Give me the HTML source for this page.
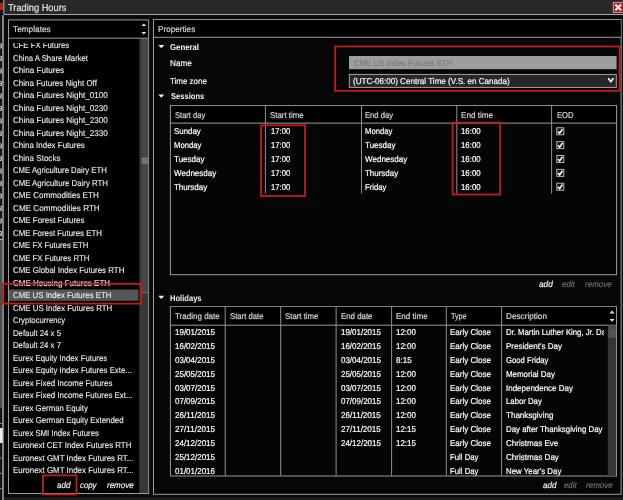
<!DOCTYPE html>
<html><head><meta charset="utf-8"><title>Trading Hours</title>
<style>
html,body{margin:0;padding:0;}
body{width:623px;height:500px;overflow:hidden;background:#0a0a0a;position:relative;font-family:"Liberation Sans",sans-serif;color:#f4f4f4;}
svg{position:absolute;left:0;top:0;}
.t{position:absolute;white-space:nowrap;font-size:8.5px;line-height:10px;transform-origin:0 0;-webkit-text-stroke:0.2px currentColor;}
.title{font-size:10px;color:#e0e0e0;}
.hdr{color:#d6d6d6;}
.b{font-weight:bold;-webkit-text-stroke:0;}
.it{font-style:italic;}
.cell{color:#fff;}
.li{color:#ececec;-webkit-text-stroke:0.12px currentColor;}
.clip{position:absolute;overflow:hidden;}
#txt{position:absolute;left:0;top:0;width:623px;height:500px;will-change:transform;}
</style></head><body>
<svg width="623" height="500" viewBox="0 0 623 500">
<rect x="4.00" y="0.00" width="619.00" height="14.00" fill="#282828" stroke="none" stroke-width="1" />
<rect x="4.00" y="14.00" width="619.00" height="1.00" fill="#a6a6a6" stroke="none" stroke-width="1" />
<rect x="0.00" y="0.00" width="4.00" height="500.00" fill="#141414" stroke="none" stroke-width="1" />
<rect x="0.00" y="3.00" width="3.00" height="7.00" fill="#b8200f" stroke="none" stroke-width="1" />
<rect x="3.00" y="0.00" width="1.50" height="14.00" fill="#7a8a80" stroke="none" stroke-width="1" />
<rect x="2.10" y="15.00" width="1.80" height="485.00" fill="#8e8e8e" stroke="none" stroke-width="1" />
<path d="M0 43.80 Q1.7 43.80 1.7 45.10 Q1.7 46.10 0 46.40" stroke="#c4c4c4" stroke-width="1.1" fill="none"/>
<path d="M0 48.00 Q1.9 48.00 1.6 46.40" stroke="#c4c4c4" stroke-width="1.1" fill="none"/>
<path d="M0 56.30 Q1.7 56.30 1.7 57.60 Q1.7 58.60 0 58.90" stroke="#c4c4c4" stroke-width="1.1" fill="none"/>
<path d="M0 60.50 Q1.9 60.50 1.6 58.90" stroke="#c4c4c4" stroke-width="1.1" fill="none"/>
<path d="M0 68.80 Q1.7 68.80 1.7 70.10 Q1.7 71.10 0 71.40" stroke="#c4c4c4" stroke-width="1.1" fill="none"/>
<path d="M0 73.00 Q1.9 73.00 1.6 71.40" stroke="#c4c4c4" stroke-width="1.1" fill="none"/>
<path d="M0 81.30 Q1.7 81.30 1.7 82.60 Q1.7 83.60 0 83.90" stroke="#c4c4c4" stroke-width="1.1" fill="none"/>
<path d="M0 85.50 Q1.9 85.50 1.6 83.90" stroke="#c4c4c4" stroke-width="1.1" fill="none"/>
<path d="M0 93.80 Q1.7 93.80 1.7 95.10 Q1.7 96.10 0 96.40" stroke="#c4c4c4" stroke-width="1.1" fill="none"/>
<path d="M0 98.00 Q1.9 98.00 1.6 96.40" stroke="#c4c4c4" stroke-width="1.1" fill="none"/>
<path d="M0 106.30 Q1.7 106.30 1.7 107.60 Q1.7 108.60 0 108.90" stroke="#c4c4c4" stroke-width="1.1" fill="none"/>
<path d="M0 110.50 Q1.9 110.50 1.6 108.90" stroke="#c4c4c4" stroke-width="1.1" fill="none"/>
<path d="M0 118.80 Q1.7 118.80 1.7 120.10 Q1.7 121.10 0 121.40" stroke="#c4c4c4" stroke-width="1.1" fill="none"/>
<path d="M0 123.00 Q1.9 123.00 1.6 121.40" stroke="#c4c4c4" stroke-width="1.1" fill="none"/>
<path d="M0 131.30 Q1.7 131.30 1.7 132.60 Q1.7 133.60 0 133.90" stroke="#c4c4c4" stroke-width="1.1" fill="none"/>
<path d="M0 135.50 Q1.9 135.50 1.6 133.90" stroke="#c4c4c4" stroke-width="1.1" fill="none"/>
<path d="M0 143.80 Q1.7 143.80 1.7 145.10 Q1.7 146.10 0 146.40" stroke="#c4c4c4" stroke-width="1.1" fill="none"/>
<path d="M0 148.00 Q1.9 148.00 1.6 146.40" stroke="#c4c4c4" stroke-width="1.1" fill="none"/>
<path d="M0 156.30 Q1.7 156.30 1.7 157.60 Q1.7 158.60 0 158.90" stroke="#c4c4c4" stroke-width="1.1" fill="none"/>
<path d="M0 160.50 Q1.9 160.50 1.6 158.90" stroke="#c4c4c4" stroke-width="1.1" fill="none"/>
<path d="M0 168.80 Q1.7 168.80 1.7 170.10 Q1.7 171.10 0 171.40" stroke="#c4c4c4" stroke-width="1.1" fill="none"/>
<path d="M0 173.00 Q1.9 173.00 1.6 171.40" stroke="#c4c4c4" stroke-width="1.1" fill="none"/>
<path d="M0 181.30 Q1.7 181.30 1.7 182.60 Q1.7 183.60 0 183.90" stroke="#c4c4c4" stroke-width="1.1" fill="none"/>
<path d="M0 185.50 Q1.9 185.50 1.6 183.90" stroke="#c4c4c4" stroke-width="1.1" fill="none"/>
<path d="M0 193.80 Q1.7 193.80 1.7 195.10 Q1.7 196.10 0 196.40" stroke="#c4c4c4" stroke-width="1.1" fill="none"/>
<path d="M0 198.00 Q1.9 198.00 1.6 196.40" stroke="#c4c4c4" stroke-width="1.1" fill="none"/>
<path d="M0 206.30 Q1.7 206.30 1.7 207.60 Q1.7 208.60 0 208.90" stroke="#c4c4c4" stroke-width="1.1" fill="none"/>
<path d="M0 210.50 Q1.9 210.50 1.6 208.90" stroke="#c4c4c4" stroke-width="1.1" fill="none"/>
<path d="M0 218.80 Q1.7 218.80 1.7 220.10 Q1.7 221.10 0 221.40" stroke="#c4c4c4" stroke-width="1.1" fill="none"/>
<path d="M0 223.00 Q1.9 223.00 1.6 221.40" stroke="#c4c4c4" stroke-width="1.1" fill="none"/>
<path d="M0 231.30 Q1.7 231.30 1.7 232.60 Q1.7 233.60 0 233.90" stroke="#c4c4c4" stroke-width="1.1" fill="none"/>
<path d="M0 235.50 Q1.9 235.50 1.6 233.90" stroke="#c4c4c4" stroke-width="1.1" fill="none"/>
<rect x="0.00" y="240.00" width="2.10" height="168.00" fill="#465050" stroke="none" stroke-width="1" />
<line x1="0.00" y1="239.50" x2="2.80" y2="239.50" stroke="#b0b0b0" stroke-width="1"/>
<line x1="0.00" y1="423.50" x2="2.20" y2="423.50" stroke="#8a8a8a" stroke-width="1"/>
<line x1="0.00" y1="458.00" x2="2.20" y2="458.00" stroke="#8a8a8a" stroke-width="1"/>
<line x1="0.00" y1="473.40" x2="2.20" y2="473.40" stroke="#8a8a8a" stroke-width="1"/>
<line x1="0.00" y1="488.60" x2="2.20" y2="488.60" stroke="#8a8a8a" stroke-width="1"/>
<rect x="0.00" y="428.00" width="2.60" height="15.00" fill="#f0f0f0" stroke="none" stroke-width="1" />
<rect x="4.00" y="497.00" width="619.00" height="3.00" fill="#1a1a1a" stroke="none" stroke-width="1" />
<rect x="613.30" y="2.40" width="10.50" height="10.00" fill="#a81a26" stroke="#dca4aa" stroke-width="0.9" />
<path d="M615.3 4.6 L621.1 10.3 M621.1 4.6 L615.3 10.3" stroke="#fbf4e2" stroke-width="2.1" fill="none"/>
<rect x="8.50" y="19.90" width="140.10" height="473.60" fill="#000" stroke="#9c9c9c" stroke-width="1" />
<rect x="139.30" y="38.50" width="8.80" height="454.50" fill="#383838" stroke="none" stroke-width="1" />
<rect x="141.50" y="38.50" width="6.60" height="254.00" fill="#474747" stroke="none" stroke-width="1" />
<line x1="141.50" y1="292.70" x2="148.00" y2="292.70" stroke="#7a7a7a" stroke-width="0.8"/>
<line x1="141.50" y1="158.40" x2="148.00" y2="158.40" stroke="#a2a2a2" stroke-width="0.8"/>
<line x1="141.50" y1="160.00" x2="148.00" y2="160.00" stroke="#a2a2a2" stroke-width="0.8"/>
<line x1="141.50" y1="161.60" x2="148.00" y2="161.60" stroke="#a2a2a2" stroke-width="0.8"/>
<line x1="141.50" y1="163.20" x2="148.00" y2="163.20" stroke="#a2a2a2" stroke-width="0.8"/>
<line x1="9.00" y1="38.20" x2="148.00" y2="38.20" stroke="#9c9c9c" stroke-width="1"/>
<path d="M141.5 26.1 L143.8 23.4 L146.1 26.1 Z M141.5 31.9 L146.1 31.9 L143.8 34.6 Z" fill="#e8e8e8"/>
<rect x="9.00" y="289.50" width="129.50" height="11.30" fill="#555555" stroke="none" stroke-width="1" />
<rect x="153.50" y="19.60" width="467.60" height="474.70" fill="#060606" stroke="#9c9c9c" stroke-width="1" />
<rect x="154.00" y="20.10" width="466.60" height="17.00" fill="#000" stroke="none" stroke-width="1" />
<line x1="154.00" y1="37.30" x2="621.10" y2="37.30" stroke="#9c9c9c" stroke-width="1"/>
<path d="M158.30 44.90 L164.30 44.90 L161.30 48.20 Z" fill="#efefef"/>
<path d="M158.30 94.50 L164.30 94.50 L161.30 97.80 Z" fill="#efefef"/>
<path d="M158.30 295.80 L164.30 295.80 L161.30 299.10 Z" fill="#efefef"/>
<rect x="349.00" y="56.00" width="267.60" height="13.20" fill="#9e9e9e" stroke="none" stroke-width="1" />
<rect x="349.30" y="74.40" width="267.00" height="13.00" fill="#272727" stroke="#b0b0b0" stroke-width="0.9" />
<path d="M608.2 78.2 L610.8 81.6 L613.4 78.2" stroke="#fff" stroke-width="1.6" fill="none"/>
<rect x="170.40" y="105.60" width="446.20" height="169.10" fill="#050505" stroke="#9c9c9c" stroke-width="1" />
<rect x="171.00" y="106.10" width="445.00" height="16.50" fill="#000" stroke="none" stroke-width="1" />
<line x1="171.00" y1="123.10" x2="616.50" y2="123.10" stroke="#9c9c9c" stroke-width="1"/>
<line x1="265.40" y1="106.00" x2="265.40" y2="193.50" stroke="#909090" stroke-width="1"/>
<line x1="361.50" y1="106.00" x2="361.50" y2="193.50" stroke="#909090" stroke-width="1"/>
<line x1="456.80" y1="106.00" x2="456.80" y2="193.50" stroke="#909090" stroke-width="1"/>
<line x1="551.60" y1="106.00" x2="551.60" y2="193.50" stroke="#909090" stroke-width="1"/>
<rect x="556.80" y="127.80" width="7.00" height="7.00" fill="#111" stroke="#c8c8c8" stroke-width="0.9" />
<path d="M558.00 131.40 l1.6 1.9 l2.9 -4.1" stroke="#fff" stroke-width="1.6" fill="none"/>
<rect x="556.80" y="141.65" width="7.00" height="7.00" fill="#111" stroke="#c8c8c8" stroke-width="0.9" />
<path d="M558.00 145.25 l1.6 1.9 l2.9 -4.1" stroke="#fff" stroke-width="1.6" fill="none"/>
<rect x="556.80" y="155.50" width="7.00" height="7.00" fill="#111" stroke="#c8c8c8" stroke-width="0.9" />
<path d="M558.00 159.10 l1.6 1.9 l2.9 -4.1" stroke="#fff" stroke-width="1.6" fill="none"/>
<rect x="556.80" y="169.35" width="7.00" height="7.00" fill="#111" stroke="#c8c8c8" stroke-width="0.9" />
<path d="M558.00 172.95 l1.6 1.9 l2.9 -4.1" stroke="#fff" stroke-width="1.6" fill="none"/>
<rect x="556.80" y="183.20" width="7.00" height="7.00" fill="#111" stroke="#c8c8c8" stroke-width="0.9" />
<path d="M558.00 186.80 l1.6 1.9 l2.9 -4.1" stroke="#fff" stroke-width="1.6" fill="none"/>
<rect x="170.40" y="306.70" width="446.10" height="169.30" fill="#050505" stroke="#9c9c9c" stroke-width="1" />
<rect x="171.00" y="307.20" width="445.00" height="18.00" fill="#000" stroke="none" stroke-width="1" />
<line x1="171.00" y1="325.20" x2="616.50" y2="325.20" stroke="#9c9c9c" stroke-width="1"/>
<line x1="225.20" y1="307.00" x2="225.20" y2="475.60" stroke="#909090" stroke-width="1"/>
<line x1="280.70" y1="307.00" x2="280.70" y2="475.60" stroke="#909090" stroke-width="1"/>
<line x1="336.10" y1="307.00" x2="336.10" y2="475.60" stroke="#909090" stroke-width="1"/>
<line x1="391.60" y1="307.00" x2="391.60" y2="475.60" stroke="#909090" stroke-width="1"/>
<line x1="446.30" y1="307.00" x2="446.30" y2="475.60" stroke="#909090" stroke-width="1"/>
<line x1="501.60" y1="307.00" x2="501.60" y2="475.60" stroke="#909090" stroke-width="1"/>
<rect x="607.80" y="325.70" width="8.30" height="150.00" fill="#353535" stroke="none" stroke-width="1" />
<rect x="608.20" y="325.70" width="7.90" height="12.30" fill="#4c4c4c" stroke="none" stroke-width="1" />
<line x1="608.50" y1="330.60" x2="616.00" y2="330.60" stroke="#5e5e5e" stroke-width="0.7"/>
<line x1="608.50" y1="332.40" x2="616.00" y2="332.40" stroke="#5e5e5e" stroke-width="0.7"/>
<line x1="608.50" y1="334.20" x2="616.00" y2="334.20" stroke="#5e5e5e" stroke-width="0.7"/>
<line x1="608.50" y1="336.00" x2="616.00" y2="336.00" stroke="#5e5e5e" stroke-width="0.7"/>
<path d="M609.6 313.4 L612.1 310.6 L614.6 313.4 Z M609.6 319 L614.6 319 L612.1 321.8 Z" fill="#e8e8e8"/>
</svg>
<div id="txt">
<span class="t title" style="left:8.20px;top:3.00px;transform:scale(0.9272,1) skewX(0.05deg);">Trading Hours</span>
<span class="t hdr" style="left:12.60px;top:24.00px;transform:scale(0.9717,1) skewX(0.05deg);">Templates</span>
<span class="t it" style="left:57.00px;top:480.00px;transform:scale(0.9409,1) skewX(0.05deg);">add</span>
<span class="t it" style="left:80.40px;top:480.00px;transform:scale(0.9196,1) skewX(0.05deg);">copy</span>
<span class="t it" style="left:106.60px;top:480.00px;transform:scale(0.9400,1) skewX(0.05deg);">remove</span>
<span class="t hdr" style="left:158.10px;top:24.00px;transform:scale(0.9613,1) skewX(0.05deg);">Properties</span>
<span class="t b" style="left:170.05px;top:42.00px;transform:scale(0.9171,1) skewX(0.05deg);">General</span>
<span class="t " style="left:170.05px;top:58.00px;transform:scale(0.9631,1) skewX(0.05deg);">Name</span>
<span class="t " style="left:170.05px;top:76.00px;transform:scale(0.9359,1) skewX(0.05deg);">Time zone</span>
<span class="t b" style="left:170.65px;top:91.00px;transform:scale(0.8910,1) skewX(0.05deg);">Sessions</span>
<span class="t b" style="left:169.70px;top:293.00px;transform:scale(0.8907,1) skewX(0.05deg);">Holidays</span>
<span class="t " style="left:353.70px;top:58.00px;transform:scale(0.9211,1) skewX(0.05deg);color:#7e7e7e">CME US Index Futures ETH</span>
<span class="t " style="left:352.60px;top:76.00px;transform:scale(0.9495,1) skewX(0.05deg);">(UTC-06:00) Central Time (V.S. en Canada)</span>
<span class="t hdr" style="left:174.50px;top:110.00px;transform:scale(0.8888,1) skewX(0.05deg);">Start day</span>
<span class="t hdr" style="left:269.70px;top:110.00px;transform:scale(0.9224,1) skewX(0.05deg);">Start time</span>
<span class="t hdr" style="left:365.40px;top:110.00px;transform:scale(0.8986,1) skewX(0.05deg);">End day</span>
<span class="t hdr" style="left:460.60px;top:110.00px;transform:scale(0.9552,1) skewX(0.05deg);">End time</span>
<span class="t hdr" style="left:556.50px;top:110.00px;transform:scale(0.8971,1) skewX(0.05deg);">EOD</span>
<span class="t cell" style="left:173.60px;top:126.00px;transform:scale(0.9263,1) skewX(0.05deg);">Sunday</span>
<span class="t cell" style="left:270.60px;top:126.00px;transform:scale(0.9005,1) skewX(0.05deg);">17:00</span>
<span class="t cell" style="left:364.60px;top:126.00px;transform:scale(0.9035,1) skewX(0.05deg);">Monday</span>
<span class="t cell" style="left:461.30px;top:126.00px;transform:scale(0.9237,1) skewX(0.05deg);">16:00</span>
<span class="t cell" style="left:173.60px;top:140.00px;transform:scale(0.9035,1) skewX(0.05deg);">Monday</span>
<span class="t cell" style="left:270.60px;top:140.00px;transform:scale(0.9005,1) skewX(0.05deg);">17:00</span>
<span class="t cell" style="left:364.60px;top:140.00px;transform:scale(0.9475,1) skewX(0.05deg);">Tuesday</span>
<span class="t cell" style="left:461.30px;top:140.00px;transform:scale(0.9237,1) skewX(0.05deg);">16:00</span>
<span class="t cell" style="left:173.60px;top:154.00px;transform:scale(0.9475,1) skewX(0.05deg);">Tuesday</span>
<span class="t cell" style="left:270.60px;top:154.00px;transform:scale(0.9005,1) skewX(0.05deg);">17:00</span>
<span class="t cell" style="left:364.60px;top:154.00px;transform:scale(0.9454,1) skewX(0.05deg);">Wednesday</span>
<span class="t cell" style="left:461.30px;top:154.00px;transform:scale(0.9237,1) skewX(0.05deg);">16:00</span>
<span class="t cell" style="left:173.60px;top:168.00px;transform:scale(0.9454,1) skewX(0.05deg);">Wednesday</span>
<span class="t cell" style="left:270.60px;top:168.00px;transform:scale(0.9005,1) skewX(0.05deg);">17:00</span>
<span class="t cell" style="left:364.60px;top:168.00px;transform:scale(0.9342,1) skewX(0.05deg);">Thursday</span>
<span class="t cell" style="left:461.30px;top:168.00px;transform:scale(0.9237,1) skewX(0.05deg);">16:00</span>
<span class="t cell" style="left:173.60px;top:182.00px;transform:scale(0.9342,1) skewX(0.05deg);">Thursday</span>
<span class="t cell" style="left:270.60px;top:182.00px;transform:scale(0.9005,1) skewX(0.05deg);">17:00</span>
<span class="t cell" style="left:364.60px;top:182.00px;transform:scale(0.9070,1) skewX(0.05deg);">Friday</span>
<span class="t cell" style="left:461.30px;top:182.00px;transform:scale(0.9237,1) skewX(0.05deg);">16:00</span>
<span class="t it" style="left:539.00px;top:279.00px;transform:scale(0.9686,1) skewX(0.05deg);">add</span>
<span class="t it" style="left:562.30px;top:279.00px;transform:scale(0.9273,1) skewX(0.05deg);color:#6e6e6e">edit</span>
<span class="t it" style="left:584.80px;top:279.00px;transform:scale(0.9435,1) skewX(0.05deg);color:#6e6e6e">remove</span>
<span class="t it" style="left:542.60px;top:480.00px;transform:scale(0.9409,1) skewX(0.05deg);">add</span>
<span class="t it" style="left:564.40px;top:480.00px;transform:scale(0.9203,1) skewX(0.05deg);color:#6e6e6e">edit</span>
<span class="t it" style="left:585.60px;top:480.00px;transform:scale(0.9435,1) skewX(0.05deg);color:#6e6e6e">remove</span>
<span class="t hdr" style="left:174.60px;top:311.00px;transform:scale(0.9437,1) skewX(0.05deg);">Trading date</span>
<span class="t hdr" style="left:229.60px;top:311.00px;transform:scale(0.9077,1) skewX(0.05deg);">Start date</span>
<span class="t hdr" style="left:285.00px;top:311.00px;transform:scale(0.9197,1) skewX(0.05deg);">Start time</span>
<span class="t hdr" style="left:340.60px;top:311.00px;transform:scale(0.9242,1) skewX(0.05deg);">End date</span>
<span class="t hdr" style="left:395.60px;top:311.00px;transform:scale(0.9433,1) skewX(0.05deg);">End time</span>
<span class="t hdr" style="left:450.60px;top:311.00px;transform:scale(0.8396,1) skewX(0.05deg);">Type</span>
<span class="t hdr" style="left:505.60px;top:311.00px;transform:scale(0.9629,1) skewX(0.05deg);">Description</span>
<div class="clip" style="left:9.00px;top:42.80px;width:129.50px;height:450.20px">
<span class="t li" style="left:3.60px;top:-2.80px;transform:scale(0.9141,1) skewX(0.05deg);">CFE FX Futures</span>
<span class="t li" style="left:3.60px;top:10.20px;transform:scale(0.9067,1) skewX(0.05deg);">China A Share Market</span>
<span class="t li" style="left:3.60px;top:22.20px;transform:scale(0.9541,1) skewX(0.05deg);">China Futures</span>
<span class="t li" style="left:3.60px;top:35.20px;transform:scale(0.9413,1) skewX(0.05deg);">China Futures Night Off</span>
<span class="t li" style="left:3.60px;top:47.20px;transform:scale(0.9558,1) skewX(0.05deg);">China Futures Night_0100</span>
<span class="t li" style="left:3.60px;top:60.20px;transform:scale(0.9558,1) skewX(0.05deg);">China Futures Night_0230</span>
<span class="t li" style="left:3.60px;top:72.20px;transform:scale(0.9558,1) skewX(0.05deg);">China Futures Night_2300</span>
<span class="t li" style="left:3.60px;top:85.20px;transform:scale(0.9558,1) skewX(0.05deg);">China Futures Night_2330</span>
<span class="t li" style="left:3.60px;top:97.20px;transform:scale(0.9385,1) skewX(0.05deg);">China Index Futures</span>
<span class="t li" style="left:3.60px;top:110.20px;transform:scale(0.9472,1) skewX(0.05deg);">China Stocks</span>
<span class="t li" style="left:3.60px;top:122.20px;transform:scale(0.9110,1) skewX(0.05deg);">CME Agriculture Dairy ETH</span>
<span class="t li" style="left:3.60px;top:135.20px;transform:scale(0.9188,1) skewX(0.05deg);">CME Agriculture Dairy RTH</span>
<span class="t li" style="left:3.60px;top:147.20px;transform:scale(0.9504,1) skewX(0.05deg);">CME Commodities ETH</span>
<span class="t li" style="left:3.60px;top:160.20px;transform:scale(0.9581,1) skewX(0.05deg);">CME Commodities RTH</span>
<span class="t li" style="left:3.60px;top:172.20px;transform:scale(0.9336,1) skewX(0.05deg);">CME Forest Futures</span>
<span class="t li" style="left:3.60px;top:185.20px;transform:scale(0.9286,1) skewX(0.05deg);">CME Forest Futures ETH</span>
<span class="t li" style="left:3.60px;top:197.20px;transform:scale(0.9126,1) skewX(0.05deg);">CME FX Futures ETH</span>
<span class="t li" style="left:3.60px;top:210.20px;transform:scale(0.9200,1) skewX(0.05deg);">CME FX Futures RTH</span>
<span class="t li" style="left:3.60px;top:222.20px;transform:scale(0.9291,1) skewX(0.05deg);">CME Global Index Futures RTH</span>
<span class="t li" style="left:3.60px;top:235.20px;transform:scale(0.9432,1) skewX(0.05deg);">CME Housing Futures ETH</span>
<span class="t li" style="left:3.60px;top:247.20px;transform:scale(0.9220,1) skewX(0.05deg);">CME US Index Futures ETH</span>
<span class="t li" style="left:3.60px;top:260.20px;transform:scale(0.9268,1) skewX(0.05deg);">CME US Index Futures RTH</span>
<span class="t li" style="left:3.60px;top:272.20px;transform:scale(0.9044,1) skewX(0.05deg);">Cryptocurrency</span>
<span class="t li" style="left:3.60px;top:285.20px;transform:scale(0.9142,1) skewX(0.05deg);">Default 24 x 5</span>
<span class="t li" style="left:3.60px;top:297.20px;transform:scale(0.9142,1) skewX(0.05deg);">Default 24 x 7</span>
<span class="t li" style="left:3.60px;top:310.20px;transform:scale(0.9181,1) skewX(0.05deg);">Eurex Equity Index Futures</span>
<span class="t li" style="left:3.60px;top:322.20px;transform:scale(0.9213,1) skewX(0.05deg);">Eurex Equity Index Futures Exte...</span>
<span class="t li" style="left:3.60px;top:335.20px;transform:scale(0.9304,1) skewX(0.05deg);">Eurex Fixed Income Futures</span>
<span class="t li" style="left:3.60px;top:347.20px;transform:scale(0.9303,1) skewX(0.05deg);">Eurex Fixed Income Futures Ext...</span>
<span class="t li" style="left:3.60px;top:360.20px;transform:scale(0.9207,1) skewX(0.05deg);">Eurex German Equity</span>
<span class="t li" style="left:3.60px;top:372.20px;transform:scale(0.9248,1) skewX(0.05deg);">Eurex German Equity Extended</span>
<span class="t li" style="left:3.60px;top:385.20px;transform:scale(0.9130,1) skewX(0.05deg);">Eurex SMI Index Futures</span>
<span class="t li" style="left:3.60px;top:397.20px;transform:scale(0.9304,1) skewX(0.05deg);">Euronext CET Index Futures RTH</span>
<span class="t li" style="left:3.60px;top:410.20px;transform:scale(0.9324,1) skewX(0.05deg);">Euronext GMT Index Futures RT...</span>
<span class="t li" style="left:3.60px;top:422.20px;transform:scale(0.9324,1) skewX(0.05deg);">Euronext GMT Index Futures RT...</span>
</div>
<div class="clip" style="left:171.00px;top:326.00px;width:433.30px;height:149.60px">
<span class="t cell" style="left:4.00px;top:1.00px;transform:scale(0.9389,1) skewX(0.05deg);">19/01/2015</span>
<span class="t cell" style="left:169.80px;top:1.00px;transform:scale(0.9366,1) skewX(0.05deg);">19/01/2015</span>
<span class="t cell" style="left:224.90px;top:1.00px;transform:scale(0.9330,1) skewX(0.05deg);">12:00</span>
<span class="t cell" style="left:278.60px;top:1.00px;transform:scale(0.9398,1) skewX(0.05deg);">Early Close</span>
<span class="t cell" style="left:334.60px;top:1.00px;transform:scale(0.9119,1) skewX(0.05deg);">Dr. Martin Luther King, Jr. Day</span>
<span class="t cell" style="left:4.00px;top:15.00px;transform:scale(0.9389,1) skewX(0.05deg);">16/02/2015</span>
<span class="t cell" style="left:169.80px;top:15.00px;transform:scale(0.9366,1) skewX(0.05deg);">16/02/2015</span>
<span class="t cell" style="left:224.90px;top:15.00px;transform:scale(0.9330,1) skewX(0.05deg);">12:00</span>
<span class="t cell" style="left:278.60px;top:15.00px;transform:scale(0.9398,1) skewX(0.05deg);">Early Close</span>
<span class="t cell" style="left:334.60px;top:15.00px;transform:scale(0.9432,1) skewX(0.05deg);">President's Day</span>
<span class="t cell" style="left:4.00px;top:29.00px;transform:scale(0.9389,1) skewX(0.05deg);">03/04/2015</span>
<span class="t cell" style="left:169.80px;top:29.00px;transform:scale(0.9366,1) skewX(0.05deg);">03/04/2015</span>
<span class="t cell" style="left:224.60px;top:29.00px;transform:scale(0.9455,1) skewX(0.05deg);">8:15</span>
<span class="t cell" style="left:278.60px;top:29.00px;transform:scale(0.9398,1) skewX(0.05deg);">Early Close</span>
<span class="t cell" style="left:334.60px;top:29.00px;transform:scale(0.9070,1) skewX(0.05deg);">Good Friday</span>
<span class="t cell" style="left:4.00px;top:43.00px;transform:scale(0.9389,1) skewX(0.05deg);">25/05/2015</span>
<span class="t cell" style="left:169.80px;top:43.00px;transform:scale(0.9366,1) skewX(0.05deg);">25/05/2015</span>
<span class="t cell" style="left:224.90px;top:43.00px;transform:scale(0.9330,1) skewX(0.05deg);">12:00</span>
<span class="t cell" style="left:278.60px;top:43.00px;transform:scale(0.9398,1) skewX(0.05deg);">Early Close</span>
<span class="t cell" style="left:334.60px;top:43.00px;transform:scale(0.9327,1) skewX(0.05deg);">Memorial Day</span>
<span class="t cell" style="left:4.00px;top:57.00px;transform:scale(0.9389,1) skewX(0.05deg);">03/07/2015</span>
<span class="t cell" style="left:169.80px;top:57.00px;transform:scale(0.9366,1) skewX(0.05deg);">03/07/2015</span>
<span class="t cell" style="left:224.90px;top:57.00px;transform:scale(0.9330,1) skewX(0.05deg);">12:00</span>
<span class="t cell" style="left:278.60px;top:57.00px;transform:scale(0.9398,1) skewX(0.05deg);">Early Close</span>
<span class="t cell" style="left:334.60px;top:57.00px;transform:scale(0.9374,1) skewX(0.05deg);">Independence Day</span>
<span class="t cell" style="left:4.00px;top:70.00px;transform:scale(0.9389,1) skewX(0.05deg);">07/09/2015</span>
<span class="t cell" style="left:169.80px;top:70.00px;transform:scale(0.9366,1) skewX(0.05deg);">07/09/2015</span>
<span class="t cell" style="left:224.90px;top:70.00px;transform:scale(0.9330,1) skewX(0.05deg);">12:00</span>
<span class="t cell" style="left:278.60px;top:70.00px;transform:scale(0.9398,1) skewX(0.05deg);">Early Close</span>
<span class="t cell" style="left:334.60px;top:70.00px;transform:scale(0.9133,1) skewX(0.05deg);">Labor Day</span>
<span class="t cell" style="left:4.00px;top:84.00px;transform:scale(0.9530,1) skewX(0.05deg);">26/11/2015</span>
<span class="t cell" style="left:169.80px;top:84.00px;transform:scale(0.9506,1) skewX(0.05deg);">26/11/2015</span>
<span class="t cell" style="left:224.90px;top:84.00px;transform:scale(0.9330,1) skewX(0.05deg);">12:00</span>
<span class="t cell" style="left:278.60px;top:84.00px;transform:scale(0.9398,1) skewX(0.05deg);">Early Close</span>
<span class="t cell" style="left:334.60px;top:84.00px;transform:scale(0.9453,1) skewX(0.05deg);">Thanksgiving</span>
<span class="t cell" style="left:4.00px;top:98.00px;transform:scale(0.9530,1) skewX(0.05deg);">27/11/2015</span>
<span class="t cell" style="left:169.80px;top:98.00px;transform:scale(0.9506,1) skewX(0.05deg);">27/11/2015</span>
<span class="t cell" style="left:224.90px;top:98.00px;transform:scale(0.9330,1) skewX(0.05deg);">12:15</span>
<span class="t cell" style="left:278.60px;top:98.00px;transform:scale(0.9398,1) skewX(0.05deg);">Early Close</span>
<span class="t cell" style="left:334.60px;top:98.00px;transform:scale(0.9253,1) skewX(0.05deg);">Day after Thanksgiving Day</span>
<span class="t cell" style="left:4.00px;top:112.00px;transform:scale(0.9389,1) skewX(0.05deg);">24/12/2015</span>
<span class="t cell" style="left:169.80px;top:112.00px;transform:scale(0.9366,1) skewX(0.05deg);">24/12/2015</span>
<span class="t cell" style="left:224.90px;top:112.00px;transform:scale(0.9330,1) skewX(0.05deg);">12:15</span>
<span class="t cell" style="left:278.60px;top:112.00px;transform:scale(0.9398,1) skewX(0.05deg);">Early Close</span>
<span class="t cell" style="left:334.60px;top:112.00px;transform:scale(0.9471,1) skewX(0.05deg);">Christmas Eve</span>
<span class="t cell" style="left:4.00px;top:126.00px;transform:scale(0.9389,1) skewX(0.05deg);">25/12/2015</span>
<span class="t cell" style="left:278.60px;top:126.00px;transform:scale(0.9116,1) skewX(0.05deg);">Full Day</span>
<span class="t cell" style="left:334.60px;top:126.00px;transform:scale(0.9490,1) skewX(0.05deg);">Christmas Day</span>
<span class="t cell" style="left:4.00px;top:140.00px;transform:scale(0.9389,1) skewX(0.05deg);">01/01/2016</span>
<span class="t cell" style="left:278.60px;top:140.00px;transform:scale(0.9116,1) skewX(0.05deg);">Full Day</span>
<span class="t cell" style="left:334.60px;top:140.00px;transform:scale(0.9268,1) skewX(0.05deg);">New Year's Day</span>
</div>
</div>
<svg width="623" height="500" viewBox="0 0 623 500">
<rect x="2.90" y="283.80" width="138.30" height="19.80" fill="none" stroke="#c41c1c" stroke-width="1.8" />
<rect x="42.90" y="475.40" width="33.60" height="19.00" fill="none" stroke="#c41c1c" stroke-width="1.8" />
<rect x="335.20" y="46.50" width="284.40" height="44.30" fill="none" stroke="#c41c1c" stroke-width="1.8" />
<rect x="261.10" y="125.30" width="43.90" height="70.70" fill="none" stroke="#c41c1c" stroke-width="1.8" />
<rect x="452.60" y="122.60" width="47.60" height="71.90" fill="none" stroke="#c41c1c" stroke-width="1.8" />
</svg>
</body></html>
